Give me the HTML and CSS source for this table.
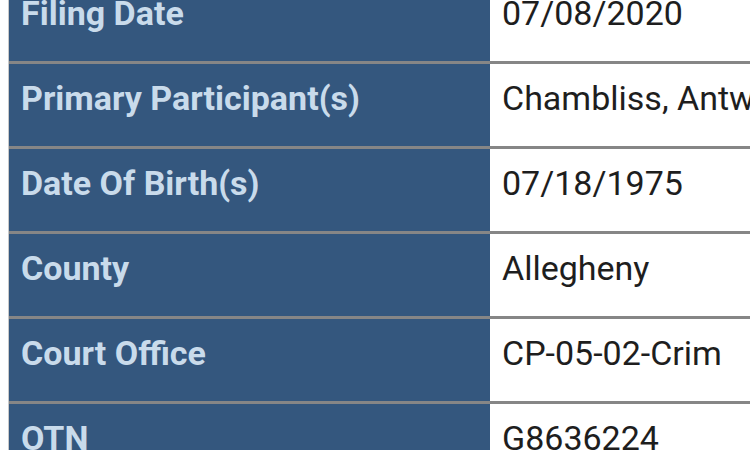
FILE: index.html
```html
<!DOCTYPE html>
<html>
<head>
<meta charset="utf-8">
<link rel="stylesheet" href="styles.css">
</head>
<body>
<div class="details">
  <div class="row"><div class="label">Filing Date</div><div class="value">07/08/2020</div></div>
  <div class="row"><div class="label">Primary Participant(s)</div><div class="value">Chambliss, Antwon</div></div>
  <div class="row"><div class="label">Date Of Birth(s)</div><div class="value">07/18/1975</div></div>
  <div class="row"><div class="label">County</div><div class="value">Allegheny</div></div>
  <div class="row"><div class="label">Court Office</div><div class="value">CP-05-02-Crim</div></div>
  <div class="row"><div class="label">OTN</div><div class="value">G8636224</div></div>
</div>
</body>
</html>
```
FILE: styles.css
```css
html, body {
  margin: 0;
  padding: 0;
  background: #ffffff;
  overflow: hidden;
  width: 750px;
  height: 450px;
}
body {
  padding-left: 8px;
  font-family: Roboto, "Liberation Sans", sans-serif;
}
.details {
  margin-top: -21px;
  width: 1000px;
  border-left: 1px solid #c9c9c9;
}
.row {
  display: grid;
  grid-template-columns: 481px 1fr;
  border-bottom: 3px solid #868686;
}
.label, .value {
  height: 82px;
  box-sizing: border-box;
  padding: 14px 12px 0 12px;
  font-size: 34px;
  line-height: 40px;
  white-space: nowrap;
}
.label {
  background: #34577e;
  color: #c9dbeb;
  font-weight: 700;
}
.value {
  background: #ffffff;
  color: #1e1e1e;
  font-weight: 400;
}
```
